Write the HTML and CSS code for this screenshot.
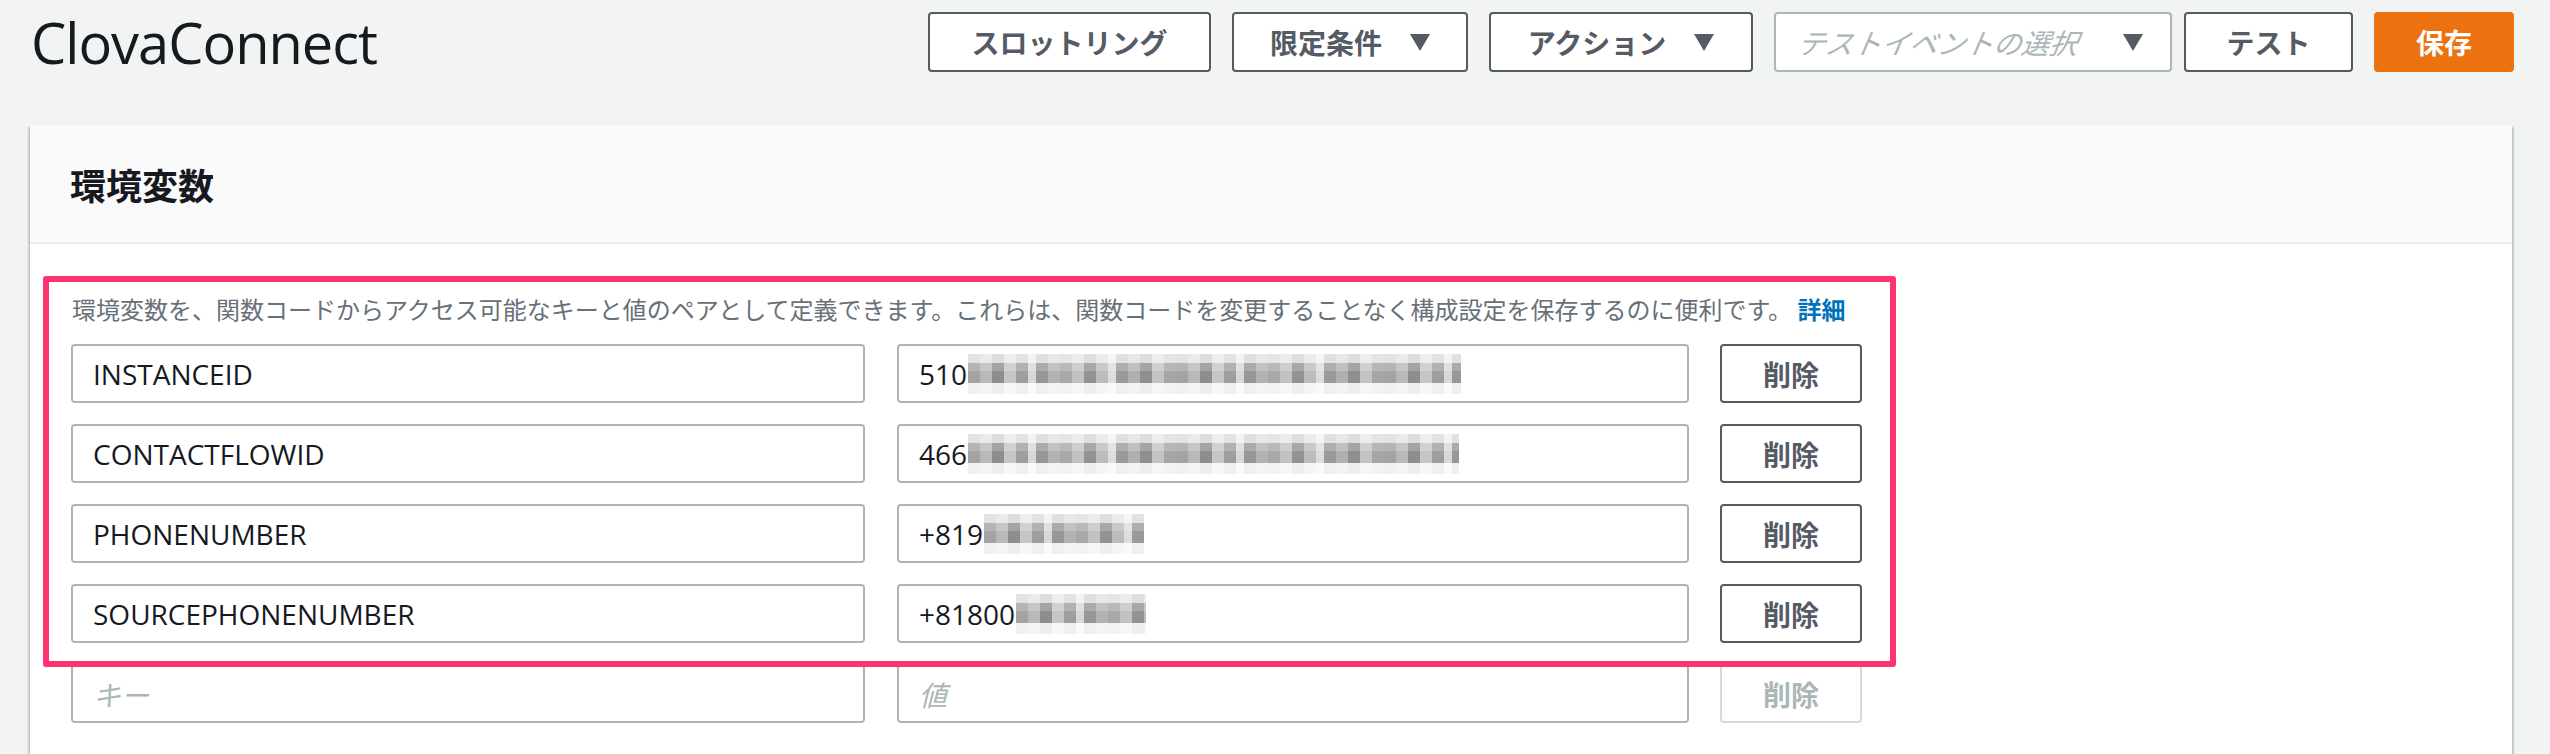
FILE: index.html
```html
<!DOCTYPE html>
<html lang="ja">
<head>
<meta charset="utf-8">
<title>ClovaConnect</title>
<link rel="stylesheet" href="styles.css">
</head>
<body>
<header class="topbar">
  <h1 class="title">ClovaConnect</h1>
  <div class="actions">
    <button class="btn btn-throttle">スロットリング</button>
    <button class="btn btn-qualifier">限定条件<svg class="caret" viewBox="0 0 20 17"><path d="M0 0H20L10 17Z"/></svg></button>
    <button class="btn btn-action">アクション<svg class="caret" viewBox="0 0 20 17"><path d="M0 0H20L10 17Z"/></svg></button>
    <div class="select"><span class="select-ph">テストイベントの選択</span><svg class="caret" viewBox="0 0 20 17"><path d="M0 0H20L10 17Z"/></svg></div>
    <button class="btn btn-test">テスト</button>
    <button class="btn btn-primary">保存</button>
  </div>
</header>

<section class="card">
  <div class="card-header"><h2 class="card-title">環境変数</h2></div>
  <div class="card-body">
    <p class="desc">環境変数を、関数コードからアクセス可能なキーと値のペアとして定義できます。これらは、関数コードを変更することなく構成設定を保存するのに便利です。 <a class="link">詳細</a></p>
    <div class="rows">
      <div class="field">INSTANCEID</div>
      <div class="field">510<span class="mosaic m-uuid"></span></div>
      <button class="btn btn-del">削除</button>

      <div class="field">CONTACTFLOWID</div>
      <div class="field">466<span class="mosaic m-uuid2"></span></div>
      <button class="btn btn-del">削除</button>

      <div class="field">PHONENUMBER</div>
      <div class="field">+819<span class="mosaic m-phone"></span></div>
      <button class="btn btn-del">削除</button>

      <div class="field">SOURCEPHONENUMBER</div>
      <div class="field">+81800<span class="mosaic m-phone2"></span></div>
      <button class="btn btn-del">削除</button>

      <div class="field field-ph">キー</div>
      <div class="field field-ph">値</div>
      <button class="btn btn-del btn-disabled">削除</button>
    </div>
    <div class="highlight"></div>
  </div>
</section>
</body>
</html>
```

FILE: styles.css
```css
* { box-sizing: border-box; }

html, body {
  margin: 0;
  padding: 0;
}

body {
  background: #f2f3f3;
  font-family: "Open Sans", "Noto Sans CJK JP", sans-serif;
  color: #16191f;
  width: 2550px;
  height: 754px;
  overflow: hidden;
}

.topbar {
  display: flex;
  align-items: center;
  justify-content: space-between;
  padding: 12px 36px 0 31px;
  height: 72px;
}

.title {
  margin: 0;
  font-size: 56px;
  font-weight: 400;
  letter-spacing: -1px;
  line-height: 60px;
  color: #16191f;
}

.actions {
  display: flex;
  align-items: center;
  gap: 21px;
}

.btn {
  display: inline-flex;
  align-items: center;
  justify-content: center;
  height: 60px;
  padding: 0;
  border: 2px solid #545b64;
  border-radius: 4px;
  background: #fff;
  color: #545b64;
  font-family: "Noto Sans CJK JP", sans-serif;
  font-weight: 700;
  font-size: 28px;
  line-height: 1;
  cursor: pointer;
}

.btn-throttle { width: 283px; }
.btn-qualifier { width: 236px; }
.btn-action { width: 264px; }

.caret {
  width: 20px;
  height: 17px;
  margin-left: 28px;
  fill: #545b64;
}

.select {
  display: flex;
  align-items: center;
  justify-content: space-between;
  width: 398px;
  height: 60px;
  padding: 0 27px 0 22px;
  border: 2px solid #aab7b8;
  border-radius: 4px;
  background: #fff;
  margin-right: -9px;
}

.select-ph {
  font-family: "Noto Sans CJK JP", sans-serif;
  font-size: 28px;
  font-style: italic;
  color: #aab7b8;
  transform: skewX(-10deg);
}

.select .caret { margin-left: 0; }

.btn-test { width: 169px; }

.btn-primary {
  width: 140px;
  background: #ec7211;
  border-color: #ec7211;
  color: #fff;
}

.card {
  margin: 53px 38px 0 30px;
  background: #fff;
  box-shadow: 0 2px 2px rgba(0, 28, 36, 0.3), 2px 2px 2px rgba(0, 28, 36, 0.15), -2px 2px 2px rgba(0, 28, 36, 0.15);
  height: 629px;
}

.card-header {
  height: 119px;
  background: #fafafa;
  border-bottom: 2px solid #eaeded;
  display: flex;
  align-items: center;
  padding-left: 40px;
}

.card-title {
  margin: 0;
  font-family: "Noto Sans CJK JP", sans-serif;
  font-size: 36px;
  font-weight: 700;
  color: #16191f;
}

.card-body {
  position: relative;
  padding: 49px 40px 0 41px;
}

.desc {
  margin: 0 0 19px 1px;
  font-family: "Noto Sans CJK JP", sans-serif;
  font-size: 24px;
  line-height: 32px;
  color: #687078;
  white-space: nowrap;
}

.link {
  color: #0073bb;
  font-weight: 700;
  text-decoration: none;
}

.rows {
  display: grid;
  width: 1791px;
  grid-template-columns: 794px 792px 142px;
  column-gap: 32px;
  row-gap: 21px;
  align-items: center;
}

.rows > :nth-child(3n) { margin-left: -1px; }

.field {
  display: flex;
  align-items: center;
  height: 59px;
  padding-left: 20px;
  border: 2px solid #aab7b8;
  border-radius: 4px;
  background: #fff;
  font-size: 28px;
  color: #16191f;
  white-space: nowrap;
}

.field-ph {
  font-family: "Noto Sans CJK JP", sans-serif;
  font-style: italic;
  color: #aab7b8;
}

.btn-del {
  width: 142px;
  height: 59px;
}

.btn-disabled {
  border-color: #d5dbdb;
  color: #aab7b8;
}

.mosaic {
  display: inline-block;
  height: 40px;
  margin-left: 1px;
  background-image:
    linear-gradient(to bottom, rgba(255,255,255,0.7) 0 22%, rgba(255,255,255,0.2) 22% 42%, rgba(255,255,255,0) 42% 72%, rgba(255,255,255,0.85) 72% 100%),
    repeating-linear-gradient(90deg, #a3a3a3 0 12px, #b9b9b9 12px 24px, #8d8d8d 24px 36px, #c6c6c6 36px 48px, #9e9e9e 48px 60px, #d8d8d8 60px 68px, #979797 68px 80px, #b3b3b3 80px 92px, #a8a8a8 92px 104px, #c2c2c2 104px 116px, #929292 116px 128px, #bcbcbc 128px 140px, #dddddd 140px 148px, #9a9a9a 148px 160px, #b0b0b0 160px 172px, #8f8f8f 172px 184px, #c4c4c4 184px 196px, #a6a6a6 196px 208px);
}

.m-uuid { width: 493px; }
.m-uuid2 { width: 491px; }
.m-phone { width: 160px; }
.m-phone2 { width: 130px; }

.highlight {
  position: absolute;
  top: 32px;
  left: 13px;
  width: 1853px;
  height: 391px;
  border: 6px solid #fe3370;
  border-radius: 3px;
  pointer-events: none;
}
```
